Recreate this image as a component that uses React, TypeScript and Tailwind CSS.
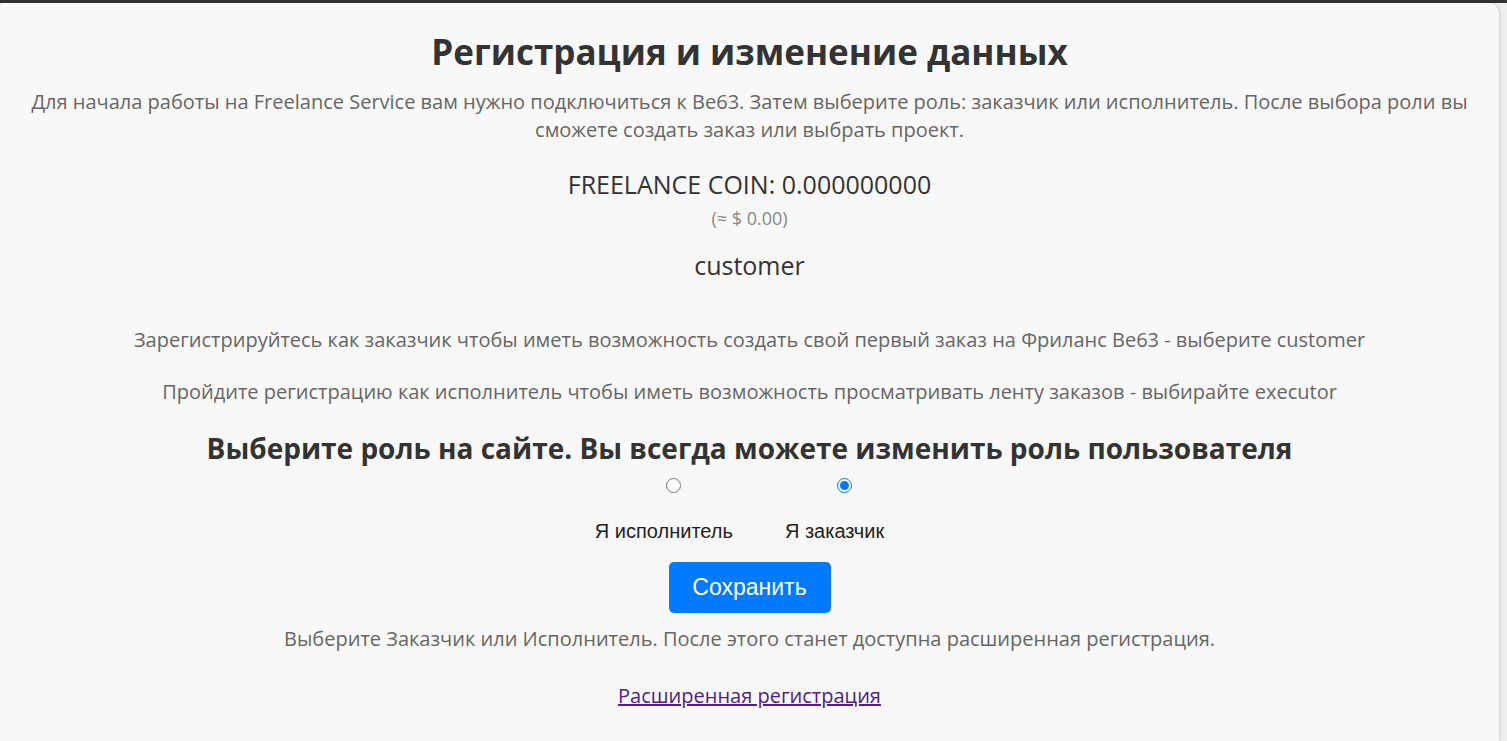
import { useState } from 'react';

export default function App() {
  const [role, setRole] = useState<'executor' | 'customer'>('customer');

  return (
    <div className="min-h-[741px] bg-[#eeeeee] border-t-[3px] border-[#333333] font-['Open_Sans',sans-serif]">
      <div className="mr-[8px] min-h-[738px] bg-[#f8f8f8] rounded-tr-[10px] rounded-tl-[4px] shadow-[1px_0_3px_rgba(0,0,0,0.12)] px-5 pt-[27px] text-center">
        <h1 className="text-[35px] leading-[44px] font-bold text-[#333333]">Регистрация и изменение данных</h1>
        <p className="mt-[14px] text-[20px] leading-[28px] text-[#666666]">
          Для начала работы на Freelance Service вам нужно подключиться к Ве63. Затем выберите роль: заказчик или исполнитель. После выбора роли вы сможете создать заказ или выбрать проект.
        </p>

        <div className="mt-[24px] text-[25px] leading-[32px] text-[#333333]">FREELANCE COIN: 0.000000000</div>
        <div className="mt-[6px] text-[18px] leading-[24px] text-[#888888]">(≈ $ 0.00)</div>
        <div className="mt-[19px] text-[25px] leading-[32px] text-[#333333]">customer</div>

        <p className="mt-[45px] text-[20px] leading-[28px] text-[#666666]">
          Зарегистрируйтесь как заказчик чтобы иметь возможность создать свой первый заказ на Фриланс Ве63 - выберите customer
        </p>
        <p className="mt-[24px] text-[20px] leading-[28px] text-[#666666]">
          Пройдите регистрацию как исполнитель чтобы иметь возможность просматривать ленту заказов - выбирайте executor
        </p>

        <h2 className="mt-[22px] text-[28px] leading-[40px] font-bold text-[#333333]">
          Выберите роль на сайте. Вы всегда можете изменить роль пользователя
        </h2>

        <div className="mt-[10px] pr-[20px] flex justify-center gap-[52px] font-['Liberation_Sans',Arial,sans-serif] text-[20px] text-[#222222]">
          <label className="flex flex-col items-center gap-[26px] cursor-pointer">
            <input
              type="radio"
              name="role"
              checked={role === 'executor'}
              onChange={() => setRole('executor')}
              className="w-[15px] h-[15px] m-0 ml-[19px] accent-[#0075ff]"
            />
            <span className="leading-[24px]">Я исполнитель</span>
          </label>
          <label className="flex flex-col items-center gap-[26px] cursor-pointer">
            <input
              type="radio"
              name="role"
              checked={role === 'customer'}
              onChange={() => setRole('customer')}
              className="w-[15px] h-[15px] m-0 ml-[19px] accent-[#0075ff]"
            />
            <span className="leading-[24px]">Я заказчик</span>
          </label>
        </div>

        <button className="mt-[19px] w-[162px] h-[51px] rounded-[5px] bg-[#007bff] text-white text-[23px] font-['Liberation_Sans',Arial,sans-serif]">
          Сохранить
        </button>

        <p className="mt-[12px] text-[20px] leading-[28px] text-[#666666]">
          Выберите Заказчик или Исполнитель. После этого станет доступна расширенная регистрация.
        </p>

        <a href="#" className="inline-block mt-[29px] text-[20px] leading-[28px] text-[#551a8b] underline">
          Расширенная регистрация
        </a>
      </div>
    </div>
  );
}
